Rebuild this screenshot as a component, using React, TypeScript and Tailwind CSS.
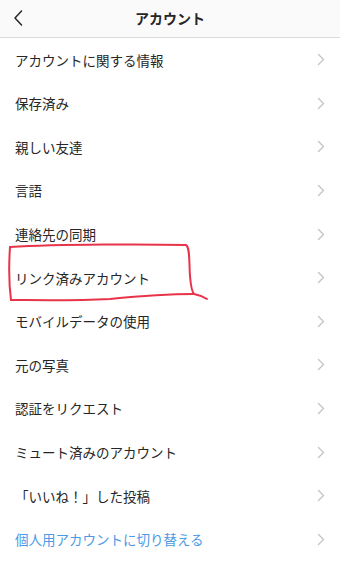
const items = [
  "アカウントに関する情報",
  "保存済み",
  "親しい友達",
  "言語",
  "連絡先の同期",
  "リンク済みアカウント",
  "モバイルデータの使用",
  "元の写真",
  "認証をリクエスト",
  "ミュート済みのアカウント",
  "「いいね！」した投稿",
];

const Chevron = () => (
  <svg width="8" height="13" viewBox="0 0 8 13" fill="none">
    <path d="M1.5 1.5 L6.5 6.5 L1.5 11.5" stroke="#c4c4c4" strokeWidth="1.4" strokeLinecap="round" strokeLinejoin="round" />
  </svg>
);

const Row = ({ label, blue }: { label: string; blue?: boolean }) => (
  <div className="flex h-[43.6px] items-center justify-between pl-[15px] pr-[15px]">
    <span className={`text-[13.5px] ${blue ? "text-[#4a9ae6]" : "text-[#262626]"}`}>{label}</span>
    <Chevron />
  </div>
);

export default function App() {
  return (
    <div
      className="relative h-[575px] w-[340px] overflow-hidden bg-white"
      style={{ fontFamily: '"Noto Sans CJK JP", "Noto Sans", sans-serif' }}
    >
      <div className="relative flex h-[38px] items-center justify-center border-b border-[#dbdbdb] bg-[#fafafa]">
        <svg className="absolute left-[12px] top-[9px]" width="12" height="18" viewBox="0 0 12 18" fill="none">
          <path d="M9.5 2 L3 9 L9.5 16" stroke="#262626" strokeWidth="1.5" strokeLinecap="round" strokeLinejoin="round" />
        </svg>
        <span className="text-[14px] font-bold text-[#262626]">アカウント</span>
      </div>
      <div className="flex flex-col">
        {items.map((t) => (
          <Row key={t} label={t} />
        ))}
        <Row label="個人用アカウントに切り替える" blue />
      </div>
      <svg className="pointer-events-none absolute left-0 top-0" width="340" height="575" fill="none">
        <path
          d="M10 247 C60 244 150 244 186 245 C190 247 189 262 190 276 C191 288 192 292 194 294 C199 295 204 297 207 299"
          stroke="#e8344a"
          strokeWidth="2"
          strokeLinecap="round"
        />
        <path
          d="M194 294 C160 294 130 297 110 299 C70 301 30 300 11 300 C9 285 9 262 10 247"
          stroke="#e8344a"
          strokeWidth="2"
          strokeLinecap="round"
        />
      </svg>
    </div>
  );
}
